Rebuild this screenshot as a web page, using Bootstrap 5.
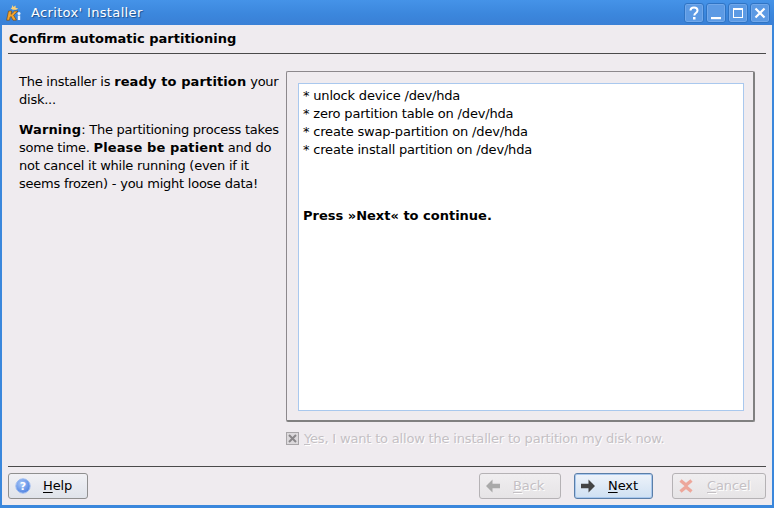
<!DOCTYPE html>
<html lang="en">
<head>
    <meta charset="UTF-8">
    <title>Acritox' Installer</title>
    <link rel="stylesheet" href="https://cdn.jsdelivr.net/npm/bootstrap@5.3.2/dist/css/bootstrap.min.css">
    <style>
        html, body { height: 100%; }
        body { font-family: "DejaVu Sans", sans-serif; font-size: 13px; line-height: 18px; letter-spacing: -.18px; color: #000; background: #efebef; overflow: hidden; }
        b { letter-spacing: 0; }
        .kde-window { width: 774px; height: 508px; border: solid #3a87dc; border-width: 0 2px 3px 2px; }
        .kde-title { height: 25px; margin: 0 -2px; padding: 0 4px 0 6px; background: linear-gradient(#4593e8, #3b86dc 60%, #3a80d6); color: #fff; font-weight: 400; letter-spacing: .35px; text-shadow: 1px 1px 1px #1c4f8c; }
        .kde-title-btn { width: 20px; height: 20px; background: #5c9ae4; border: 1px solid #2f74c4; box-shadow: inset 0 0 0 1px #72a8ea; border-radius: 3px; }
        .page-head { margin: 0 6px; height: 29px; border-bottom: 1px solid #4a4a4a; font-weight: 700; padding: 5px 0 0 1px; letter-spacing: 0; }
        .side-text { width: 284px; padding: 19px 4px 0 17px; letter-spacing: -.24px; }
        .side-text b { letter-spacing: .12px; }
        .side-text p { margin-bottom: 12px; }
        .text-frame { width: 469px; height: 351px; padding: 11px 9px 9px 11px; border: 1px solid #8c888c; border-right: 2px solid #808080; border-bottom: 2px solid #808080; border-radius: 2px; margin-top: 17px; }
        .text-view { height: 100%; background: #fff; border: 1px solid #a9c8ee; padding: 3px 4px; }
        .confirm-row { height: 44px; margin-left: 284px; padding-top: 8px; color: #c4c0c4; text-shadow: 1px 1px 0 #fff; gap: 5px; }
        .confirm-box { width: 13px; height: 13px; margin-top: 2px; }
        .foot-line { margin: 0 6px; border-top: 1px solid #4a4a4a; height: 1px; }
        .foot-row { padding: 6px 6px 0 6px; }
        .kde-btn { height: 26px; border: 1px solid #8f8f8f; border-radius: 3px; background: linear-gradient(#f1f1f5, #dfe3ea); padding: 0; font-size: 13px; letter-spacing: -.1px; color: #000; display: flex; align-items: center; }
        .kde-btn svg { flex: none; }
        .kde-btn.off { color: #c4c0c4; background: linear-gradient(#f0eef0, #e6e4e6); border-color: #b5b2b5; text-shadow: 1px 1px 0 #fff; }
        .kde-btn.on { border-color: #5a7ea8; background: linear-gradient(#eef3fa, #cfe0f2); box-shadow: inset 0 0 0 1px #a9c8ee; }
        .kde-btn u { text-underline-offset: 2px; }
    </style>
</head>
<body>
    <div class="kde-window d-flex flex-column">
        <div class="kde-title d-flex align-items-center">
            <svg width="16" height="18" viewBox="0 0 16 18" style="margin-right:9px">
                <path d="M2.5 7h3.2l-.7 3.4L8.6 7h3.4l-4.4 4.2 2.8 5H7l-2-3.8-.9.9-.6 2.9H.6z" fill="#f3a52f" stroke="#6e3f0c" stroke-width=".6"/>
                <path d="M6 1l1.4 2 2.2-1.6L9.6 4l2.6.2-2 1.6H6.8L4.6 4.2 6 3.6z" fill="#fcd27a"/>
                <circle cx="13" cy="9.5" r="1.5" fill="#e8f0fa"/><rect x="11.8" y="11.5" width="2.4" height="4.5" fill="#e8f0fa"/>
            </svg>
            <span>Acritox' Installer</span>
            <div class="ms-auto d-flex" style="gap:2px">
                <div class="kde-title-btn d-flex align-items-center justify-content-center">
                    <svg width="12" height="14" viewBox="0 0 12 14"><path d="M2.5 4.5C2.5 2.5 4 1.5 6 1.5s3.5 1 3.5 3c0 2.5-3.2 2.5-3.2 5" fill="none" stroke="#fff" stroke-width="2"/><rect x="5" y="11" width="2.5" height="2.5" fill="#fff"/></svg>
                </div>
                <div class="kde-title-btn d-flex align-items-center justify-content-center">
                    <svg width="12" height="14" viewBox="0 0 12 14"><rect x="1" y="11" width="10" height="2.2" fill="#fff"/></svg>
                </div>
                <div class="kde-title-btn d-flex align-items-center justify-content-center">
                    <svg width="12" height="12" viewBox="0 0 12 12"><rect x="1.5" y="1.5" width="9" height="9" fill="none" stroke="#fff" stroke-width="1"/><rect x="1" y="1" width="10" height="2" fill="#fff"/></svg>
                </div>
                <div class="kde-title-btn d-flex align-items-center justify-content-center">
                    <svg width="12" height="12" viewBox="0 0 12 12"><path d="M1.5 1.5l9 9M10.5 1.5l-9 9" stroke="#fff" stroke-width="2.2"/></svg>
                </div>
            </div>
        </div>

        <div class="page-head">Confirm automatic partitioning</div>

        <div class="d-flex">
            <div class="side-text">
                <p>The installer is <b>ready to partition</b> your disk...</p>
                <p><b>Warning</b>: The partitioning process takes some time. <b>Please be patient</b> and do not cancel it while running (even if it seems frozen) - you might loose data!</p>
            </div>
            <div class="text-frame">
                <div class="text-view">
                    * unlock device /dev/hda<br>
                    * zero partition table on /dev/hda<br>
                    * create swap-partition on /dev/hda<br>
                    * create install partition on /dev/hda<br>
                    <br><br>
                    <div style="margin-top:12px"><b>Press »Next« to continue.</b></div>
                </div>
            </div>
        </div>

        <div class="confirm-row d-flex align-items-start">
            <svg class="confirm-box" viewBox="0 0 13 13"><rect x=".5" y=".5" width="12" height="12" fill="#dcd9dc" stroke="#a8a5a8"/><path d="M3 3l7 7M10 3l-7 7" stroke="#8a878a" stroke-width="2"/></svg>
            <span><u>Y</u>es, I want to allow the installer to partition my disk now.</span>
        </div>

        <div class="foot-line"></div>
        <div class="foot-row d-flex">
            <button type="button" class="kde-btn" style="width:80px">
                <svg style="margin-left:6px" width="16" height="16" viewBox="0 0 16 16">
                    <defs><radialGradient id="helpFill" cx=".4" cy=".35" r=".7"><stop offset="0" stop-color="#a9c8f8"/><stop offset="1" stop-color="#4a7fe0"/></radialGradient></defs>
                    <circle cx="8" cy="8" r="7.2" fill="url(#helpFill)" stroke="#9fbdf0"/>
                    <text x="8" y="12" font-size="11" font-weight="700" fill="#fff" text-anchor="middle" font-family="DejaVu Sans">?</text>
                </svg>
                <span style="margin-left:12px"><u>H</u>elp</span>
            </button>
            <button type="button" class="kde-btn off ms-auto" style="width:82px">
                <svg style="margin-left:5px" width="16" height="16" viewBox="0 0 16 16"><path d="M1 8l6.5-6.5v4.2h7.5v4.6H7.5v4.2z" fill="#a9a9a9"/></svg>
                <span style="margin-left:12px"><u>B</u>ack</span>
            </button>
            <button type="button" class="kde-btn on" style="width:79px;margin-left:13px">
                <svg style="margin-left:5px" width="16" height="16" viewBox="0 0 16 16"><path d="M15 8L8.5 1.5v4.2H1v4.6h7.5v4.2z" fill="#444"/></svg>
                <span style="margin-left:12px"><u>N</u>ext</span>
            </button>
            <button type="button" class="kde-btn off" style="width:94px;margin-left:19px">
                <svg style="margin-left:5px" width="16" height="16" viewBox="0 0 16 16"><path d="M2.5 2.5L8 7l5.5-4.5M2.5 13.5L8 9l5.5 4.5" fill="none" stroke="#eda79b" stroke-width="3.4"/></svg>
                <span style="margin-left:13px"><u>C</u>ancel</span>
            </button>
        </div>
    </div>
    <script src="https://cdn.jsdelivr.net/npm/bootstrap@5.3.2/dist/js/bootstrap.bundle.min.js"></script>
</body>
</html>
